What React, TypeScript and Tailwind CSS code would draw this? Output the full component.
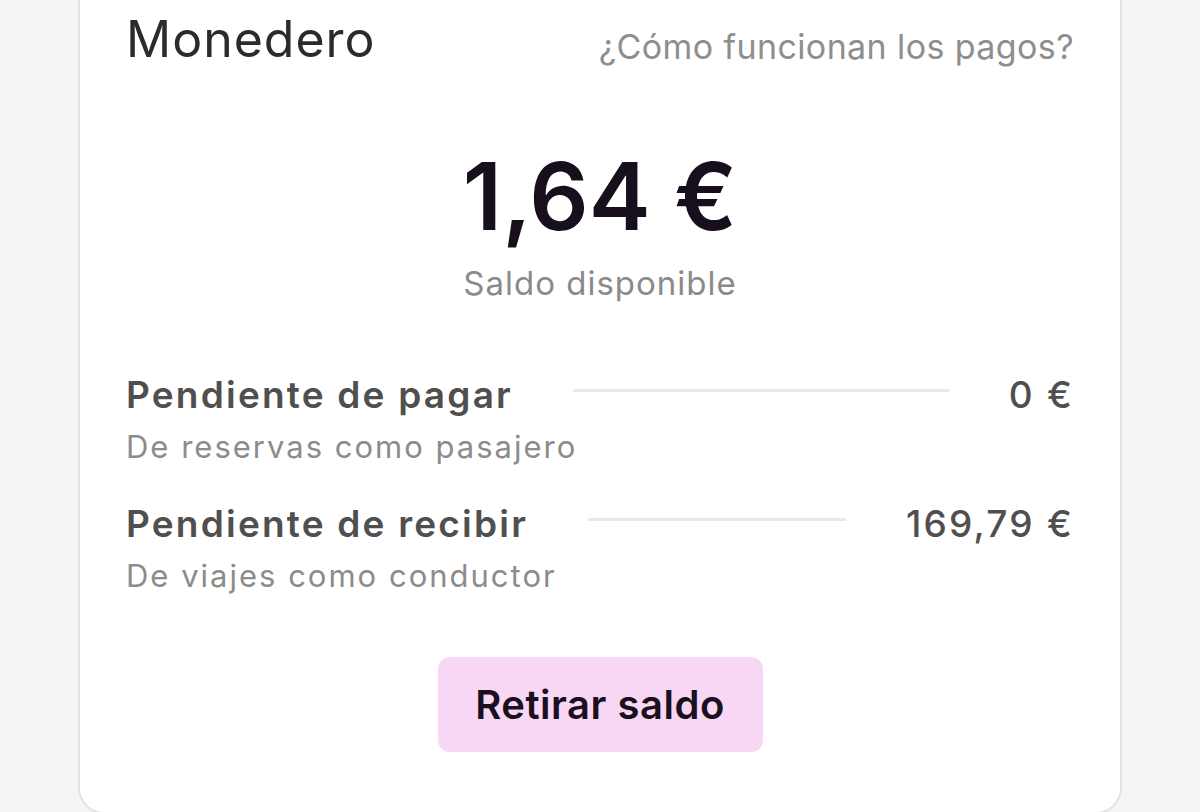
import React from "react";

interface PendingRowProps {
  readonly title: string;
  readonly subtitle: string;
  readonly amount: string;
}

function PendingRow({ title, subtitle, amount }: PendingRowProps) {
  return (
    <div className="flex flex-col">
      <div className="flex items-center gap-[60px]">
        <span className="text-[37px] leading-none font-semibold tracking-[2.2px] text-[#4f4f4f]">
          {title}
        </span>
        <div className="mb-[8px] h-[3px] flex-1 bg-[#e8e8e8]" />
        <span className="text-[37px] leading-none font-medium tracking-[2.2px] text-[#4f4f4f]">
          {amount}
        </span>
      </div>
      <span className="mt-[18px] text-[31px] leading-none tracking-[2px] text-[#8c8c8c]">
        {subtitle}
      </span>
    </div>
  );
}

export default function App() {
  return (
    <div
      className="h-[812px] overflow-hidden bg-[#f5f5f5] px-[78px]"
      style={{ fontFamily: "Inter, 'Noto Sans', sans-serif" }}
    >
      <div className="-mt-[40px] rounded-[26px] border-2 border-[#e3e3e3] bg-white px-[46px] pt-[52px] pb-[60px]">
        <div className="flex items-start justify-between">
          <h1 className="text-[50px] leading-none font-normal tracking-[1px] text-[#2b2b2b]">
            Monedero
          </h1>
          <a className="mt-[16px] text-[34px] leading-none tracking-[0.4px] text-[#8e8e8e]">
            ¿Cómo funcionan los pagos?
          </a>
        </div>

        <div className="mt-[86px] flex flex-col items-center">
          <span className="text-[93px] leading-none font-semibold text-[#170f1c]">
            1,64 €
          </span>
          <span className="mt-[24px] text-[33px] leading-none tracking-[1px] text-[#8a8a8a]">
            Saldo disponible
          </span>
        </div>

        <div className="mt-[76px] flex flex-col gap-[43px]">
          <PendingRow
            title="Pendiente de pagar"
            subtitle="De reservas como pasajero"
            amount="0 €"
          />
          <PendingRow
            title="Pendiente de recibir"
            subtitle="De viajes como conductor"
            amount="169,79 €"
          />
        </div>

        <div className="mt-[66px] flex justify-center">
          <button className="h-[95px] w-[325px] rounded-[12px] bg-[#f8d7f5] text-[40px] font-semibold tracking-[0.5px] text-[#1b1020]">
            Retirar saldo
          </button>
        </div>
      </div>
    </div>
  );
}
